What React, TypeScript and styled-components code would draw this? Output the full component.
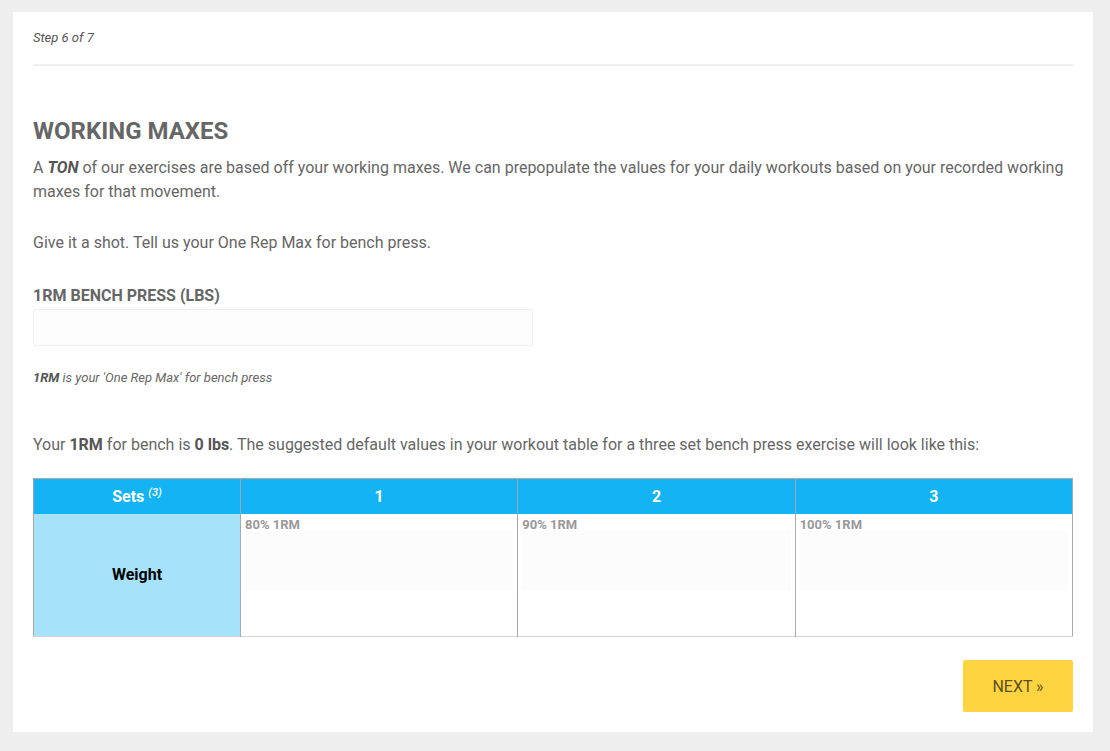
import React from "react";
import styled, { createGlobalStyle } from "styled-components";

const Global = createGlobalStyle`
  html, body { margin: 0; padding: 0; background: #eeeeee; }
  body { font-family: Roboto, "Liberation Sans", Arial, sans-serif; color: #666; }
  * { box-sizing: border-box; }
`;

const Card = styled.div`
  margin: 12px 0 19px 13px;
  width: 1080px;
  background: #fff;
  padding: 0 20px 20px;
`;

const StepBar = styled.div`
  padding-top: 17px;
  padding-bottom: 17px;
  border-bottom: 2px solid #efefef;
`;

const StepText = styled.div`
  font-size: 13px;
  line-height: 18px;
  font-style: italic;
  color: #555;
`;

const Heading = styled.h2`
  margin: 52px 0 12px;
  font-size: 24px;
  line-height: 26px;
  font-weight: 700;
  color: #666;
`;

const Para = styled.p<{ $mt?: number }>`
  margin: ${(p) => p.$mt ?? 0}px 0 0;
  font-size: 16px;
  line-height: 24px;
  color: #666;
  b { color: #555; }
`;

const Strong = styled.strong`
  font-style: italic;
  color: #555;
`;

const Label = styled.div`
  margin-top: 29px;
  font-size: 16px;
  line-height: 24px;
  font-weight: 700;
  color: #666;
`;

const Input = styled.div`
  margin-top: 1px;
  width: 500px;
  height: 37px;
  border: 1px solid #efefef;
  background: #fdfdfd;
  border-radius: 2px;
`;

const Help = styled.div`
  margin-top: 23px;
  font-size: 13px;
  line-height: 18px;
  font-style: italic;
  color: #666;
  b { color: #555; }
`;

const Table = styled.table`
  margin-top: 21px;
  width: 1040px;
  border-collapse: collapse;
  table-layout: fixed;
  border-left: 1px solid #aaa;
  border-right: 1px solid #aaa;
  border-top: 1px solid #aaa;
  border-bottom: 1px solid #d4d4d4;
`;

const HeadCell = styled.th<{ $w?: number }>`
  ${(p) => (p.$w ? `width: ${p.$w}px;` : "")}
  height: 35px;
  background: #14b3f3;
  color: #fff;
  font-size: 16px;
  font-weight: 700;
  text-align: center;
  vertical-align: middle;
  border-left: 1px solid #9aa7ad;
  padding: 0;
  sup { font-style: italic; font-size: 11px; font-weight: 500; }
`;

const RowHead = styled.td`
  height: 123px;
  background: #a6e3fa;
  color: #000;
  font-size: 16px;
  font-weight: 700;
  text-align: center;
  vertical-align: middle;
  padding: 0;
`;

const ValueCell = styled.td`
  height: 123px;
  vertical-align: top;
  border-left: 1px solid #aaa;
  padding: 4px 4px 0;
`;

const ValueLabel = styled.div`
  font-size: 13px;
  line-height: 14px;
  font-weight: 700;
  color: #999;
`;

const ValueBox = styled.div`
  margin-top: -1px;
  height: 60px;
  background: #fcfcfc;
`;

const Footer = styled.div`
  margin-top: 23px;
  display: flex;
  justify-content: flex-end;
`;

const NextButton = styled.button`
  width: 110px;
  height: 52px;
  border: none;
  border-radius: 2px;
  background: #fed440;
  color: #5e5020;
  font-family: Roboto, "Liberation Sans", Arial, sans-serif;
  font-size: 16px;
  font-weight: 400;
  padding: 0;
`;

export default function App() {
  const cols = [
    { n: "1", v: "80% 1RM" },
    { n: "2", v: "90% 1RM" },
    { n: "3", v: "100% 1RM" },
  ];
  return (
    <>
      <Global />
      <Card>
        <StepBar>
          <StepText>Step 6 of 7</StepText>
        </StepBar>
        <Heading>WORKING MAXES</Heading>
        <Para>
          A <Strong>TON</Strong> of our exercises are based off your working maxes. We can prepopulate the values for
          your daily workouts based on your recorded working maxes for that movement.
        </Para>
        <Para $mt={27}>Give it a shot. Tell us your One Rep Max for bench press.</Para>
        <Label>1RM BENCH PRESS (LBS)</Label>
        <Input />
        <Help>
          <b>1RM</b> is your 'One Rep Max' for bench press
        </Help>
        <Para $mt={46}>
          Your <b>1RM</b> for bench is <b>0 lbs</b>. The suggested default values in your workout table for a three
          set bench press exercise will look like this:
        </Para>
        <Table>
          <thead>
            <tr>
              <HeadCell $w={207}>
                Sets <sup>(3)</sup>
              </HeadCell>
              {cols.map((c) => (
                <HeadCell key={c.n}>{c.n}</HeadCell>
              ))}
            </tr>
          </thead>
          <tbody>
            <tr>
              <RowHead>Weight</RowHead>
              {cols.map((c) => (
                <ValueCell key={c.n}>
                  <ValueLabel>{c.v}</ValueLabel>
                  <ValueBox />
                </ValueCell>
              ))}
            </tr>
          </tbody>
        </Table>
        <Footer>
          <NextButton>NEXT »</NextButton>
        </Footer>
      </Card>
    </>
  );
}
